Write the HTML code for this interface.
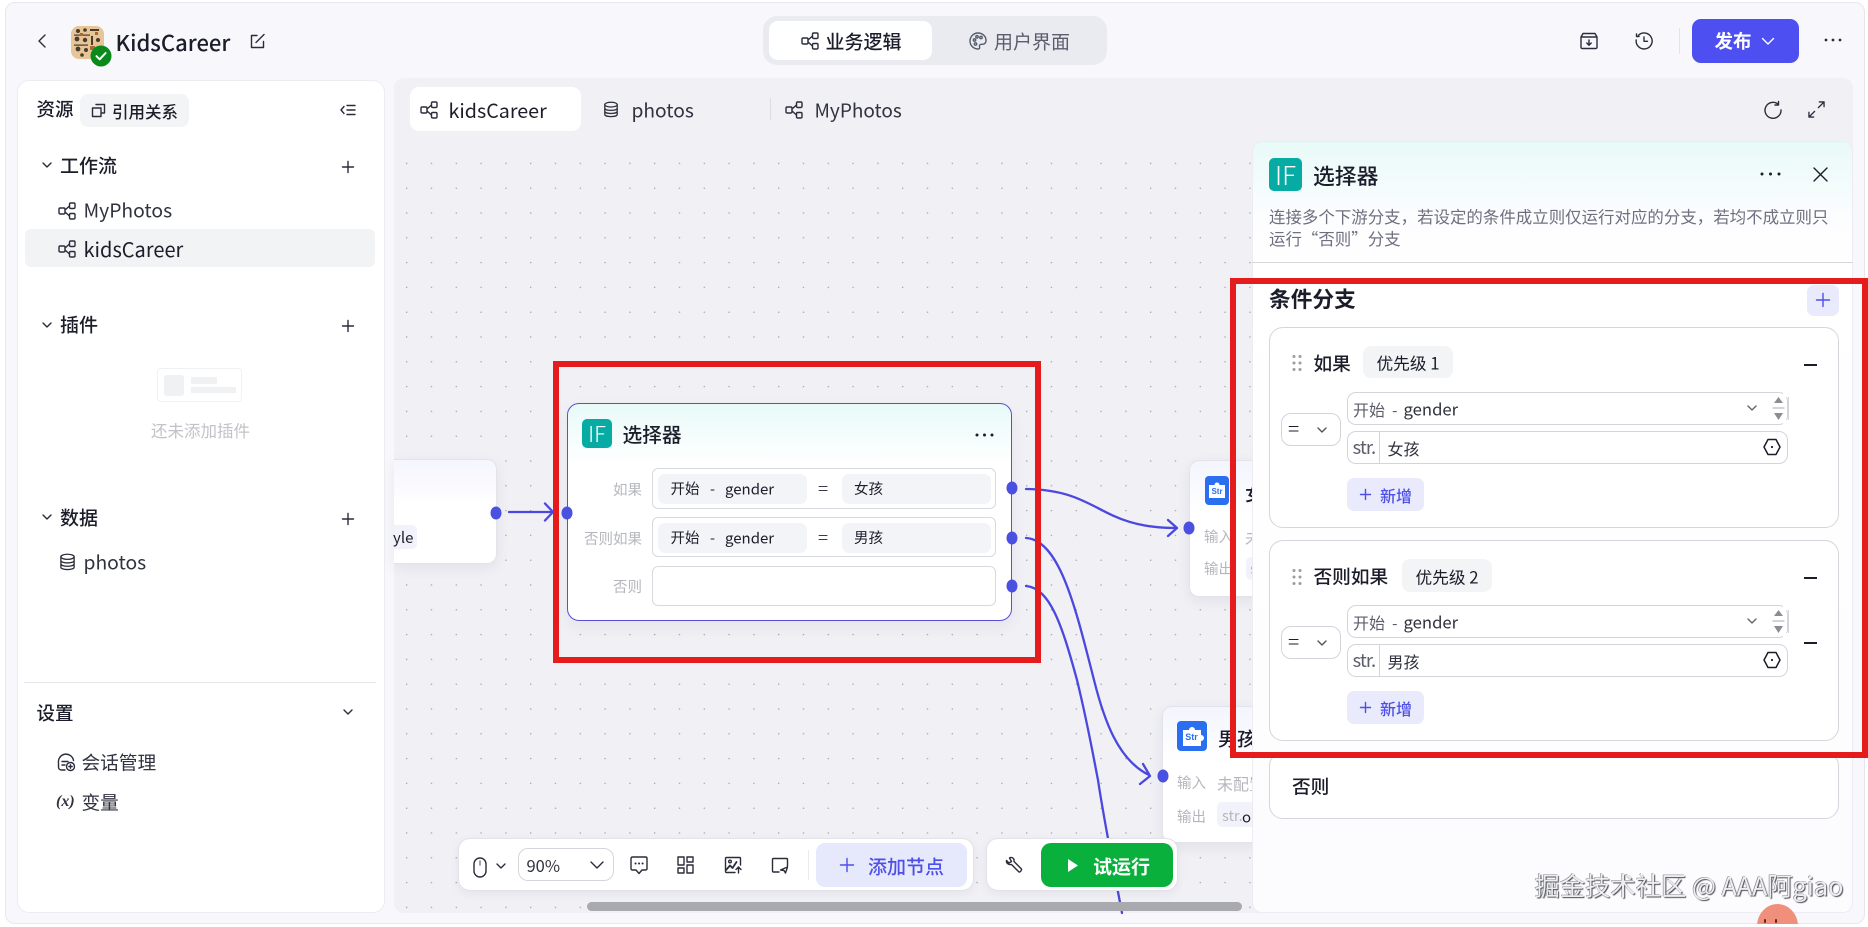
<!DOCTYPE html>
<html lang="zh-CN">
<head>
<meta charset="utf-8">
<title>KidsCareer</title>
<style>
*{box-sizing:border-box;margin:0;padding:0}
html,body{width:1868px;height:927px;overflow:hidden;background:#fff}
body{position:relative;font-family:"Noto Sans CJK SC","Liberation Sans",sans-serif;color:#1c1d2b}
.a{position:absolute}
.t{position:absolute;white-space:nowrap;line-height:1;transform:translateY(-50%)}
.ic{position:absolute;overflow:visible;fill:none;stroke:#2a2c3a;stroke-width:1.4;stroke-linecap:round;stroke-linejoin:round}
.g{background:#f3f4f6;border-radius:8px}
.b{background:#fff;border:1px solid #d4d5db}
.red{position:absolute;background:#e51c1c;z-index:40}
.row{position:absolute;left:652px;width:344px;background:#fff;border:1px solid #d8d9df;border-radius:6px}
.pill{position:absolute;height:30px;background:#f3f4f7;border-radius:7px}
.lb{color:#b6b7bd;font-size:14.5px}
.card{position:absolute;left:1268.5px;width:570.5px;background:#fff;border:1px solid #d5d6dc;border-radius:14px}
.blue{background:#e9eafc;border-radius:7px}
.port{position:absolute;width:11px;height:13px;border-radius:50%;background:#4a50e0;transform:translate(-50%,-50%)}
</style>
</head>
<body>
<svg width="0" height="0" style="position:absolute">
<defs>
<symbol id="flow" viewBox="0 0 18 18"><rect x="1" y="6" width="6" height="6" rx="1.2"/><rect x="11.5" y="1" width="5.5" height="5.5" rx="1.2"/><rect x="11.5" y="11.5" width="5.5" height="5.5" rx="1.2"/><path d="M7 8 L11.5 4 M7 10 L11.5 14"/></symbol>
<symbol id="db" viewBox="0 0 18 18"><ellipse cx="9" cy="3.5" rx="7" ry="2.7"/><path d="M2 3.5V14.500C2 16 5 17 9 17C13 17 16 16 16 14.500V3.500M2 7.500C2 9 5 10 9 10C13 10 16 9 16 7.500M2 11C2 12.500 5 13.500 9 13.500C13 13.500 16 12.500 16 11"/></symbol>
<symbol id="hex" viewBox="0 0 18 18"><path d="M5 1.500H13L17 9L13 16.500H5L1 9Z" stroke-width="1.5"/><circle cx="9" cy="9" r="1.1" fill="#1c1d2b" stroke="none"/></symbol>
<symbol id="drag" viewBox="0 0 10 18"><g fill="#9b9ca3" stroke="none"><circle cx="2" cy="2.500" r="1.500"/><circle cx="8" cy="2.500" r="1.500"/><circle cx="2" cy="9" r="1.500"/><circle cx="8" cy="9" r="1.500"/><circle cx="2" cy="15.500" r="1.500"/><circle cx="8" cy="15.500" r="1.500"/></g></symbol>
<pattern id="dots" x="406" y="162.7" width="24.8" height="24.8" patternUnits="userSpaceOnUse"><circle cx="0.7" cy="0.7" r="0.7" fill="#9a9aa3"/></pattern>
</defs>
</svg>

<!-- outer frame -->
<div class="a" style="left:5px;top:2px;width:1860px;height:922px;background:#f8f8fc;border:1px solid #e8e8ec;border-radius:10px"></div>

<!-- top bar -->
<svg class="ic" style="left:36px;top:33px" width="12" height="16" stroke-width="1.7"><path d="M9 2 L3 8 L9 14"/></svg>
<svg class="a" style="left:70.500px;top:26px" width="33" height="33" viewBox="0 0 33 33">
<rect width="33" height="33" rx="8" fill="#e6c596"/>
<g fill="#4a3b2c"><circle cx="7" cy="5" r="2"/><circle cx="14" cy="4" r="1.800"/><rect x="19" y="3" width="9" height="2"/><circle cx="6" cy="13" r="2.400"/><circle cx="14" cy="14" r="2.200"/><rect x="20" y="10" width="2" height="9"/><circle cx="27" cy="14" r="2"/><circle cx="7" cy="23" r="2.400"/><circle cx="15" cy="24" r="2"/><rect x="3" y="8.500" width="16" height="1.200"/><rect x="3" y="18.500" width="14" height="1.200"/><circle cx="11" cy="29" r="1.800"/></g>
<g fill="#a9683a"><rect x="9" y="7" width="3" height="3"/><rect x="19" y="20" width="5" height="4"/><rect x="24" y="6" width="3" height="3"/></g>
</svg>
<svg class="a" style="left:90px;top:45px" width="22" height="22" viewBox="0 0 22 22"><circle cx="11" cy="11" r="10.500" fill="#0b8a1c"/><path d="M6.500 11.200 L9.700 14.300 L15.600 8" fill="none" stroke="#fff" stroke-width="2" stroke-linecap="round" stroke-linejoin="round"/></svg>
<div class="t" style="left:115.500px;top:41.500px;font-size:22px;font-weight:500">KidsCareer</div>
<svg class="ic" style="left:249px;top:33px" width="17" height="16" stroke-width="1.600"><path d="M8 2.500H2.500V14.500H14.500V8.500M7 9.500 L15 1.500"/></svg>

<!-- segment -->
<div class="a" style="left:763px;top:16px;width:344px;height:49px;background:#eaebf1;border-radius:14px"></div>
<div class="a" style="left:769px;top:21px;width:163px;height:39px;background:#fff;border-radius:9px"></div>
<svg class="ic" style="left:801px;top:32px" width="18" height="18"><use href="#flow"/></svg>
<div class="t" style="left:825.500px;top:41px;font-size:19px;font-weight:500">业务逻辑</div>
<svg class="ic" style="left:969px;top:32px;stroke:#555a68" width="18" height="18" viewBox="0 0 18 18"><path d="M9 1C4.500 1 1 4.600 1 9C1 13.400 4.500 17 9 17C10.500 17 11 16 10.500 14.800C10 13.400 11 12.200 12.500 12.300C15 12.500 17 11.500 17 8.500C17 4.300 13.500 1 9 1Z"/><circle cx="5.500" cy="8" r="1.200"/><circle cx="8" cy="4.800" r="1.200"/><circle cx="12" cy="5.500" r="1.200"/><circle cx="6.500" cy="12" r="1.200"/></svg>
<div class="t" style="left:994px;top:41px;font-size:19px;color:#5a5e6c">用户界面</div>

<!-- top right -->
<svg class="ic" style="left:1580px;top:32px" width="18" height="18" viewBox="0 0 18 18" stroke-width="1.500"><path d="M3 1.500H15L17 5V15.500C17 16 16.500 16.500 16 16.500H2C1.500 16.500 1 16 1 15.500V5ZM1 5H17M9 8V13M6.800 11 L9 13.200 L11.200 11"/></svg>
<svg class="ic" style="left:1635px;top:32px" width="18" height="18" viewBox="0 0 18 18" stroke-width="1.500"><path d="M3.500 3.300A8 8 0 1 1 1.200 8M1.500 2V4.500H4M9 5V9.300H12.500"/></svg>
<div class="a" style="left:1679px;top:28px;width:1px;height:26px;background:#e3e4e9"></div>
<div class="a" style="left:1691.500px;top:19px;width:107px;height:44px;background:#4d4ff0;border-radius:9px"></div>
<div class="t" style="left:1714.500px;top:41px;font-size:18.500px;font-weight:700;color:#fff">发布</div>
<svg class="ic" style="left:1761px;top:37px;stroke:#fff" width="14" height="9" stroke-width="1.500"><path d="M1.500 1.500 L7 7 L12.500 1.500"/></svg>
<svg class="a" style="left:1824px;top:38px" width="18" height="4"><g fill="#2a2c3a"><circle cx="2" cy="2" r="1.400"/><circle cx="9" cy="2" r="1.400"/><circle cx="16" cy="2" r="1.400"/></g></svg>

<!-- left panel -->
<div class="a" style="left:16.500px;top:80px;width:368px;height:833px;background:#fff;border:1px solid #ecedf1;border-radius:12px"></div>
<div class="t" style="left:36.500px;top:109px;font-size:18.500px;font-weight:500">资源</div>
<div class="a g" style="left:79.500px;top:94px;width:109.500px;height:33px"></div>
<svg class="ic" style="left:91px;top:103px" width="15" height="15" viewBox="0 0 15 15"><path d="M5 1.500H13.500V10H10M1.500 5H10V13.500H1.500Z"/></svg>
<div class="t" style="left:112px;top:110.500px;font-size:16.500px;font-weight:500">引用关系</div>
<svg class="ic" style="left:340px;top:104px" width="16" height="12" viewBox="0 0 16 12"><path d="M4 2.500 L1 6 L4 9.500M7 1.500H15M7 6H15M7 10.500H15"/></svg>

<svg class="ic" style="left:42px;top:162px" width="10" height="7"><path d="M1 1 L5 5 L9 1"/></svg>
<div class="t" style="left:60px;top:165px;font-size:19px;font-weight:500">工作流</div>
<svg class="ic" style="left:342px;top:161px" width="12" height="12"><path d="M6 0.500V11.500M0.500 6H11.500"/></svg>
<svg class="ic" style="left:58px;top:201.500px" width="18" height="18"><use href="#flow"/></svg>
<div class="t" style="left:83.500px;top:210px;font-size:19.300px;color:#30323f">MyPhotos</div>
<div class="a" style="left:25px;top:229px;width:349.500px;height:38px;background:#f2f3f5;border-radius:6px"></div>
<svg class="ic" style="left:58px;top:240px" width="18" height="18"><use href="#flow"/></svg>
<div class="t" style="left:83.500px;top:249px;font-size:20px;color:#1c1d2b">kidsCareer</div>

<svg class="ic" style="left:42px;top:322px" width="10" height="7"><path d="M1 1 L5 5 L9 1"/></svg>
<div class="t" style="left:60px;top:324px;font-size:19px;font-weight:500">插件</div>
<svg class="ic" style="left:342px;top:320px" width="12" height="12"><path d="M6 0.500V11.500M0.500 6H11.500"/></svg>
<div class="a" style="left:156.500px;top:368px;width:85px;height:34px;border:1px solid #f0f1f3;border-radius:4px;background:#fff"></div>
<div class="a" style="left:164px;top:375px;width:20px;height:21px;background:#f0f1f3;border-radius:3px"></div>
<div class="a" style="left:190.500px;top:377px;width:26px;height:7px;background:#f0f1f3"></div>
<div class="a" style="left:190.500px;top:387px;width:45px;height:6px;background:#f0f1f3"></div>
<div class="t" style="left:151px;top:430px;font-size:16.500px;color:#c2c3c9">还未添加插件</div>

<svg class="ic" style="left:42px;top:514px" width="10" height="7"><path d="M1 1 L5 5 L9 1"/></svg>
<div class="t" style="left:60px;top:517px;font-size:19px;font-weight:500">数据</div>
<svg class="ic" style="left:342px;top:513px" width="12" height="12"><path d="M6 0.500V11.500M0.500 6H11.500"/></svg>
<svg class="ic" style="left:59px;top:553px" width="17" height="18"><use href="#db"/></svg>
<div class="t" style="left:83.500px;top:562px;font-size:19.300px;color:#30323f">photos</div>

<div class="a" style="left:24px;top:682px;width:352px;height:1px;background:#e6e7eb"></div>
<div class="t" style="left:36.500px;top:713px;font-size:18.500px;font-weight:500">设置</div>
<svg class="ic" style="left:343px;top:709px" width="10" height="7"><path d="M1 1 L5 5 L9 1"/></svg>
<svg class="ic" style="left:57px;top:754px" width="19" height="18" viewBox="0 0 19 18" stroke-width="1.300"><path d="M8 16H4.500C2.500 16 1.500 14.500 1.500 13V9A7.500 7.500 0 0 1 16.500 6.500M5 7.500H11M5 11H8"/><circle cx="13.500" cy="12.500" r="4"/><path d="M13.500 10.800V14.200M11.800 12.500H15.200"/></svg>
<div class="t" style="left:81.500px;top:763px;font-size:18.700px;color:#30323f">会话管理</div>
<div class="t" style="left:56px;top:802px;font-size:16px;font-weight:700;font-style:italic;color:#30323f;font-family:'Liberation Serif',serif">(x)</div>
<div class="t" style="left:81.500px;top:803px;font-size:18.700px;color:#30323f">变量</div>

<!-- canvas -->
<div class="a" id="canvas" style="left:393.500px;top:78px;width:1459.500px;height:835px;background:#f0f0f5;border-radius:10px"></div>
<svg class="a" style="left:0;top:0" width="1868" height="927"><rect x="394" y="150" width="858" height="763" fill="url(#dots)"/></svg>

<!-- tabs -->
<div class="a" style="left:410px;top:87px;width:171px;height:44px;background:#fff;border-radius:9px"></div>
<svg class="ic" style="left:420px;top:101px" width="18" height="18"><use href="#flow"/></svg>
<div class="t" style="left:448.500px;top:110px;font-size:19.700px">kidsCareer</div>
<svg class="ic" style="left:603px;top:101px" width="16" height="17"><use href="#db"/></svg>
<div class="t" style="left:631.500px;top:110px;font-size:19.200px;color:#30323f">photos</div>
<div class="a" style="left:770px;top:98px;width:1px;height:22px;background:#dcdde2"></div>
<svg class="ic" style="left:785px;top:101px" width="18" height="18"><use href="#flow"/></svg>
<div class="t" style="left:814.500px;top:110px;font-size:19px;color:#30323f">MyPhotos</div>
<svg class="ic" style="left:1764px;top:101px" width="18" height="18" viewBox="0 0 18 18" stroke-width="1.500"><path d="M14.500 3.500A8 8 0 1 0 17 9M14.500 0.500V4H11"/></svg>
<svg class="ic" style="left:1808px;top:101px" width="17" height="17" viewBox="0 0 18 18" stroke-width="1.600"><path d="M11 7 L17 1M12 1H17V6M7 11 L1 17M1 12V17H6"/></svg>

<!-- prev node -->
<div class="a" style="left:394px;top:459px;width:102.500px;height:105px;background:linear-gradient(#f5f5fe,#fff 45%);border:1px solid #e3e3ea;border-left:0;border-radius:0 10px 10px 0;box-shadow:0 4px 14px rgba(30,30,60,.07)"></div>
<div class="a" style="left:394px;top:525px;width:23px;height:24px;background:#f2f3fa;border-radius:0 5px 5px 0"></div>
<div class="t" style="left:393px;top:538px;font-size:15px;width:24px;overflow:hidden;line-height:22px">yle</div>
<div class="port" style="left:496px;top:513px"></div>

<!-- selector node -->
<div class="a" style="left:567px;top:403px;width:445px;height:218px;background:linear-gradient(#e8faf8,#fff 28%);border:1px solid #5650d6;border-radius:12px;box-shadow:0 6px 16px rgba(30,30,60,.06)"></div>
<div class="a" style="left:582px;top:419px;width:30px;height:29px;background:#06aca3;border-radius:5px;color:#fff;font-size:22px;line-height:29px;text-align:center;font-weight:300">IF</div>
<div class="t" style="left:622.500px;top:433.500px;font-size:19.700px;font-weight:500">选择器</div>
<svg class="a" style="left:975px;top:433px" width="19" height="4"><g fill="#1c1d2b"><circle cx="2" cy="2" r="1.500"/><circle cx="9.500" cy="2" r="1.500"/><circle cx="17" cy="2" r="1.500"/></g></svg>

<div class="t lb" style="right:1226px;top:490px">如果</div>
<div class="t lb" style="right:1226px;top:538.500px">否则如果</div>
<div class="t lb" style="right:1226px;top:587px">否则</div>
<div class="row" style="top:468px;height:41px"></div>
<div class="row" style="top:517px;height:40px"></div>
<div class="row" style="top:566px;height:40px"></div>
<div class="pill" style="left:657.500px;top:474px;width:149.500px"></div>
<div class="pill" style="left:842px;top:474px;width:148.500px"></div>
<div class="pill" style="left:657.500px;top:523px;width:149.500px"></div>
<div class="pill" style="left:842px;top:523px;width:148.500px"></div>
<div class="t" style="left:670.500px;top:489px;font-size:14.500px">开始</div>
<div class="t" style="left:710px;top:489px;font-size:14.500px">-</div>
<div class="t" style="left:725px;top:489px;font-size:15px">gender</div>
<div class="t" style="left:818px;top:488px;font-size:19px;font-weight:300">=</div>
<div class="t" style="left:854px;top:489px;font-size:14.500px">女孩</div>
<div class="t" style="left:670.500px;top:538px;font-size:14.500px">开始</div>
<div class="t" style="left:710px;top:538px;font-size:14.500px">-</div>
<div class="t" style="left:725px;top:538px;font-size:15px">gender</div>
<div class="t" style="left:818px;top:537px;font-size:19px;font-weight:300">=</div>
<div class="t" style="left:854px;top:538px;font-size:14.500px">男孩</div>
<div class="port" style="left:567px;top:513px"></div>
<div class="port" style="left:1012px;top:488px"></div>
<div class="port" style="left:1012px;top:538px"></div>
<div class="port" style="left:1012px;top:586px"></div>

<!-- node 1 -->
<div class="a" style="left:1189px;top:459.500px;width:80px;height:137.500px;background:linear-gradient(#f3f5fe,#fff 40%);border:1px solid #e3e3ea;border-radius:10px;box-shadow:0 4px 14px rgba(30,30,60,.07)"></div>
<svg class="a" style="left:1205px;top:476px" width="24" height="29" viewBox="0 0 24 29"><rect width="24" height="29" rx="4" fill="#2a6ff0"/><path d="M4 9H9.500A2.500 2.500 0 1 1 14.500 9H20V22H4Z" fill="#fff"/><text x="12" y="18" font-size="8" font-weight="700" fill="#2a6ff0" text-anchor="middle" font-family="Liberation Sans,sans-serif">Str</text></svg>
<div class="t" style="left:1245px;top:493px;font-size:19px;font-weight:500">女孩</div>
<div class="t lb" style="left:1204px;top:537px">输入</div>
<div class="t lb" style="left:1245px;top:537px;font-size:16px">未配置</div>
<div class="t lb" style="left:1204px;top:569px">输出</div>
<div class="a" style="left:1246px;top:557px;width:30px;height:23px;background:#f2f3fa;border-radius:5px"></div>
<div class="t lb" style="left:1250px;top:569px">str.</div>
<div class="port" style="left:1189px;top:528px"></div>

<!-- node 2 -->
<div class="a" style="left:1162px;top:705.500px;width:100px;height:137.500px;background:linear-gradient(#f3f5fe,#fff 40%);border:1px solid #e3e3ea;border-radius:10px;box-shadow:0 4px 14px rgba(30,30,60,.07)"></div>
<svg class="a" style="left:1177px;top:721px" width="30" height="30" viewBox="0 0 30 30"><rect width="30" height="30" rx="4" fill="#2a6ff0"/><path d="M6 9H12A3 3 0 1 1 18 9H24V14A3 3 0 1 1 24 20V25H6Z" fill="#fff"/><text x="14.500" y="19" font-size="9" font-weight="700" fill="#2a6ff0" text-anchor="middle" font-family="Liberation Sans,sans-serif">Str</text></svg>
<div class="t" style="left:1218px;top:738px;font-size:19px;font-weight:500">男孩</div>
<div class="t lb" style="left:1177px;top:783px">输入</div>
<div class="t lb" style="left:1217px;top:783px;font-size:16px">未配置</div>
<div class="t lb" style="left:1177px;top:817px">输出</div>
<div class="a" style="left:1216.500px;top:802px;width:40px;height:25px;background:#f2f3fa;border-radius:5px"></div>
<div class="t lb" style="left:1222px;top:816px">str.</div>
<div class="t" style="left:1242px;top:817px;font-size:15px">o</div>
<div class="port" style="left:1162.500px;top:776px"></div>

<!-- edges -->
<svg class="a" style="left:0;top:0" width="1868" height="927" fill="none" stroke="#4a48de" stroke-width="2.300" stroke-linecap="round" stroke-linejoin="round">
<path d="M509 512 H552 M545 503.500 L553 512 L545 520.500"/>
<path d="M1026 489 C1100 490 1098 528 1176 528 M1168 520 L1177 528 L1168 536"/>
<path d="M1026 538 C1060 540 1076 610 1094 680 C1104 720 1118 760 1149 775 M1143 764 L1150 776 L1140 784"/>
<path d="M1026 586 C1050 588 1062 625 1077 680 C1088 725 1094 760 1098 780 C1104 820 1112 860 1122 913"/>
</svg>

<!-- toolbars -->
<div class="a" style="left:457.500px;top:838px;width:516px;height:53px;background:#fff;border:1px solid #e2e3e8;border-radius:12px;box-shadow:0 3px 10px rgba(30,30,60,.06)"></div>
<svg class="ic" style="left:473px;top:857px" width="14" height="21" viewBox="0 0 14 21" stroke-width="1.400"><rect x="1" y="1" width="12" height="19" rx="6"/><path d="M7 4V8" stroke="#777"/></svg>
<svg class="ic" style="left:496px;top:863px" width="10" height="7"><path d="M1 1 L5 5 L9 1"/></svg>
<div class="a" style="left:518px;top:848px;width:95.500px;height:33px;background:#fff;border:1px solid #d5d6dc;border-radius:10px"></div>
<div class="t" style="left:526.500px;top:865px;font-size:16.500px;color:#30323f">90%</div>
<svg class="ic" style="left:590px;top:861px" width="14" height="9"><path d="M1 1 L7 7 L13 1"/></svg>
<svg class="ic" style="left:630px;top:856px" width="18" height="19" viewBox="0 0 18 19" stroke="#1c1d2b"><path d="M2.500 1H15.500C16.400 1 17 1.600 17 2.500V12.500C17 13.400 16.400 14 15.500 14H12L9 17.500L6 14H2.500C1.600 14 1 13.400 1 12.500V2.500C1 1.600 1.600 1 2.500 1Z"/><path d="M5.500 7.500H5.600M9 7.500H9.100M12.500 7.500H12.600" stroke-width="2"/></svg>
<svg class="ic" style="left:677px;top:856px" width="17" height="18" viewBox="0 0 17 18"><rect x="1" y="1" width="6" height="8"/><rect x="10" y="1" width="6" height="5"/><rect x="1" y="12" width="6" height="5"/><rect x="10" y="9" width="6" height="8"/></svg>
<svg class="ic" style="left:724px;top:856px" width="19" height="18" viewBox="0 0 19 18"><path d="M11 16.500H2.500C1.900 16.500 1.500 16.100 1.500 15.500V2.500C1.500 1.900 1.900 1.500 2.500 1.500H15.500C16.100 1.500 16.500 1.900 16.500 2.500V9"/><path d="M2 14 L6 9.500 L8.500 12 L12.500 6" stroke-width="1.800"/><circle cx="6" cy="5.500" r="1.300"/><path d="M14.500 17V11M12 13.500 L14.500 11 L17 13.500"/></svg>
<svg class="ic" style="left:771px;top:857px" width="18" height="17" viewBox="0 0 18 17"><path d="M8 15H2.500C1.900 15 1.500 14.600 1.500 14V2.500C1.500 1.900 1.900 1.500 2.500 1.500H15.500C16.100 1.500 16.500 1.900 16.500 2.500V9M9.500 13 L16.500 10 L14.500 16 L13 13.500 Z"/></svg>
<div class="a" style="left:808px;top:850px;width:1px;height:30px;background:#ebebef"></div>
<div class="a" style="left:816px;top:843px;width:150.500px;height:44px;background:#e6e8fb;border-radius:9px"></div>
<svg class="ic" style="left:840px;top:858px;stroke:#4d4fe8" width="14" height="14"><path d="M7 0.500V13.500M0.500 7H13.500"/></svg>
<div class="t" style="left:868px;top:866px;font-size:19px;font-weight:500;color:#4d4fe8">添加节点</div>

<div class="a" style="left:986px;top:838px;width:192px;height:53px;background:#fff;border:1px solid #e2e3e8;border-radius:12px;box-shadow:0 3px 10px rgba(30,30,60,.06)"></div>
<svg class="ic" style="left:1005px;top:856px" width="18" height="18" viewBox="0 0 18 18" stroke-width="1.400"><path d="M1.500 4.500 L4 7 L6.500 5.500 L4.500 2 C7 0.500 9.500 2.500 9 5.500 L16.500 13 C17 14 15 16.500 14 16 L6.500 8.500 C4 9 1 7.500 1.500 4.500Z"/></svg>
<div class="a" style="left:1041px;top:843px;width:132px;height:44px;background:#09b03b;border-radius:10px"></div>
<svg class="a" style="left:1067px;top:858px" width="12" height="15"><path d="M1 1 L11 7.500 L1 14Z" fill="#fff"/></svg>
<div class="t" style="left:1093px;top:866px;font-size:19px;font-weight:700;color:#fff">试运行</div>

<!-- scrollbar -->
<div class="a" style="left:587px;top:902px;width:655px;height:9px;background:#a9aab0;border-radius:5px"></div>

<!-- right panel -->
<div class="a" style="left:1252px;top:141px;width:601px;height:772px;background:linear-gradient(#e8faf8,#fdfdff 80px,#fff 125px,#fcfcfe);border:1px solid #ececf2;border-radius:10px;z-index:10"></div>
<div id="rp" style="position:absolute;left:0;top:0;z-index:11">
<div class="a" style="left:1269px;top:158px;width:33px;height:33px;background:#06aca3;border-radius:5px;color:#fff;font-size:26px;line-height:33px;text-align:center;font-weight:300">IF</div>
<div class="t" style="left:1313px;top:175.500px;font-size:21.800px;font-weight:500">选择器</div>
<svg class="a" style="left:1760px;top:172px" width="21" height="4"><g fill="#1c1d2b"><circle cx="2" cy="2" r="1.500"/><circle cx="10.500" cy="2" r="1.500"/><circle cx="19" cy="2" r="1.500"/></g></svg>
<svg class="ic" style="left:1813px;top:167px;stroke:#1c1d2b" width="15" height="15" stroke-width="1.600"><path d="M1 1 L14 14 M14 1 L1 14"/></svg>
<div class="t" style="left:1269px;top:215.500px;font-size:16.470px;color:#6e7080">连接多个下游分支，若设定的条件成立则仅运行对应的分支，若均不成立则只</div>
<div class="t" style="left:1269px;top:237.500px;font-size:16.470px;color:#6e7080">运行“否则”分支</div>
<div class="a" style="left:1252px;top:262px;width:601px;height:1px;background:#d5d5da"></div>

<div class="t" style="left:1269px;top:298.500px;font-size:21.700px;font-weight:700">条件分支</div>
<div class="a blue" style="left:1806.500px;top:285px;width:32.500px;height:31px"></div>
<svg class="ic" style="left:1816px;top:293px;stroke:#4d4fe8" width="14" height="14"><path d="M7 0.500V13.500M0.500 7H13.500"/></svg>

<!-- card 1 -->
<div class="card" style="top:327px;height:201px"></div>
<svg class="a" style="left:1292px;top:354px" width="10" height="18"><use href="#drag"/></svg>
<div class="t" style="left:1313.500px;top:364px;font-size:18.700px;font-weight:500">如果</div>
<div class="a g" style="left:1363px;top:346px;width:90px;height:32px"></div>
<div class="t" style="left:1376.500px;top:363px;font-size:16.700px">优先级 1</div>
<div class="a" style="left:1804px;top:364px;width:13px;height:1.600px;background:#1c1d2b"></div>

<div class="a b" style="left:1280.500px;top:413px;width:60px;height:33px;border-radius:10px"></div>
<div class="t" style="left:1288px;top:429px;font-size:21px;font-weight:300">=</div>
<svg class="ic" style="left:1317px;top:427px;stroke:#555" width="10" height="7" stroke-width="1.200"><path d="M1 1 L5 5 L9 1"/></svg>

<div class="a b" style="left:1347px;top:392px;width:441px;height:33px;border-radius:9px"></div>
<div class="a" style="left:1783px;top:391px;width:6px;height:6px;background:#fff"></div>
<div class="a" style="left:1783px;top:420px;width:6px;height:6px;background:#fff"></div>
<div class="t" style="left:1353px;top:409px;font-size:16px;color:#5c5e6b">开始</div>
<div class="t" style="left:1392px;top:409px;font-size:16px;color:#5c5e6b">-</div>
<div class="t" style="left:1403.500px;top:409px;font-size:16.700px;color:#30323f">gender</div>
<svg class="ic" style="left:1747px;top:405px;stroke:#666" width="10" height="7" stroke-width="1.100"><path d="M1 1 L5 5 L9 1"/></svg>
<svg class="a" style="left:1772px;top:397px" width="13" height="23"><path d="M6.500 0 L11 6 H2Z M6.500 23 L11 16 H2Z" fill="#8c8d94"/><path d="M0.500 11H12.500" stroke="#a9aab0"/></svg>
<div class="a" style="left:1788px;top:397px;width:1px;height:23px;background:#d4d5db"></div>

<div class="a b" style="left:1347px;top:431px;width:441px;height:33px;border-radius:9px"></div>
<div class="t" style="left:1352.500px;top:446.500px;font-size:18.500px;letter-spacing:-.9px;color:#5c5e6b">str.</div>
<div class="a" style="left:1378.500px;top:432px;width:1px;height:31px;background:#d4d5db"></div>
<div class="t" style="left:1387.500px;top:447.500px;font-size:16px;color:#30323f">女孩</div>
<svg class="ic" style="left:1763px;top:438px;stroke:#1c1d2b" width="18" height="18"><use href="#hex"/></svg>

<div class="a blue" style="left:1347px;top:478px;width:76.500px;height:33px"></div>
<svg class="ic" style="left:1360px;top:489px;stroke:#4d4fe8" width="11" height="11"><path d="M5.500 0.500V10.500M0.500 5.500H10.500"/></svg>
<div class="t" style="left:1380px;top:495px;font-size:16px;font-weight:500;color:#4d4fe8">新增</div>

<!-- card 2 -->
<div class="card" style="top:540px;height:201px"></div>
<svg class="a" style="left:1292px;top:567.500px" width="10" height="18"><use href="#drag"/></svg>
<div class="t" style="left:1313.500px;top:577px;font-size:18.700px;font-weight:500">否则如果</div>
<div class="a g" style="left:1401.500px;top:559px;width:90px;height:33px"></div>
<div class="t" style="left:1415.500px;top:576.500px;font-size:16.700px">优先级 2</div>
<div class="a" style="left:1804px;top:577px;width:13px;height:1.600px;background:#1c1d2b"></div>
<div class="a" style="left:1804px;top:642px;width:13px;height:1.600px;background:#1c1d2b"></div>

<div class="a b" style="left:1280.500px;top:626px;width:60px;height:33px;border-radius:10px"></div>
<div class="t" style="left:1288px;top:642px;font-size:21px;font-weight:300">=</div>
<svg class="ic" style="left:1317px;top:640px;stroke:#555" width="10" height="7" stroke-width="1.200"><path d="M1 1 L5 5 L9 1"/></svg>

<div class="a b" style="left:1347px;top:605px;width:441px;height:33px;border-radius:9px"></div>
<div class="a" style="left:1783px;top:604px;width:6px;height:6px;background:#fff"></div>
<div class="a" style="left:1783px;top:633px;width:6px;height:6px;background:#fff"></div>
<div class="t" style="left:1353px;top:622px;font-size:16px;color:#5c5e6b">开始</div>
<div class="t" style="left:1392px;top:622px;font-size:16px;color:#5c5e6b">-</div>
<div class="t" style="left:1403.500px;top:622px;font-size:16.700px;color:#30323f">gender</div>
<svg class="ic" style="left:1747px;top:618px;stroke:#666" width="10" height="7" stroke-width="1.100"><path d="M1 1 L5 5 L9 1"/></svg>
<svg class="a" style="left:1772px;top:610px" width="13" height="23"><path d="M6.500 0 L11 6 H2Z M6.500 23 L11 16 H2Z" fill="#8c8d94"/><path d="M0.500 11H12.500" stroke="#a9aab0"/></svg>
<div class="a" style="left:1788px;top:610px;width:1px;height:23px;background:#d4d5db"></div>

<div class="a b" style="left:1347px;top:644px;width:441px;height:33px;border-radius:9px"></div>
<div class="t" style="left:1352.500px;top:659.500px;font-size:18.500px;letter-spacing:-.9px;color:#5c5e6b">str.</div>
<div class="a" style="left:1378.500px;top:645px;width:1px;height:31px;background:#d4d5db"></div>
<div class="t" style="left:1387.500px;top:660.500px;font-size:16px;color:#30323f">男孩</div>
<svg class="ic" style="left:1763px;top:651px;stroke:#1c1d2b" width="18" height="18"><use href="#hex"/></svg>

<div class="a blue" style="left:1347px;top:691px;width:76.500px;height:33px"></div>
<svg class="ic" style="left:1360px;top:702px;stroke:#4d4fe8" width="11" height="11"><path d="M5.500 0.500V10.500M0.500 5.500H10.500"/></svg>
<div class="t" style="left:1380px;top:708px;font-size:16px;font-weight:500;color:#4d4fe8">新增</div>

<!-- card 3 -->
<div class="card" style="top:752px;height:66.500px"></div>
<div class="t" style="left:1292px;top:787px;font-size:18.700px;font-weight:500">否则</div>
</div>

<!-- mascot -->
<div class="a" style="left:1757px;top:904px;width:41px;height:20px;overflow:hidden;z-index:12">
<div class="a" style="left:0;top:0;width:41px;height:44px;border-radius:50%;background:#f0907c"></div>
<div class="a" style="left:7px;top:15px;width:2px;height:4px;background:#5c2a20;border-radius:1px"></div>
<div class="a" style="left:18px;top:15px;width:2px;height:4px;background:#5c2a20;border-radius:1px"></div>
</div>

<!-- watermark -->
<div class="t" style="left:1534.500px;top:886px;font-size:25.300px;color:#eeeef0;text-shadow:1px 1px 1px #4a4b50,-0.6px -0.6px 0 #85868c;z-index:30">掘金技术社区 @ AAA阿giao</div>

<!-- red annotation boxes -->
<div class="red" style="left:553px;top:361px;width:488px;height:6px"></div>
<div class="red" style="left:553px;top:657px;width:488px;height:6px"></div>
<div class="red" style="left:553px;top:361px;width:6px;height:302px"></div>
<div class="red" style="left:1034.500px;top:361px;width:6.500px;height:302px"></div>

<div class="red" style="left:1229.500px;top:278px;width:638.500px;height:6px"></div>
<div class="red" style="left:1229.500px;top:752px;width:638.500px;height:6px"></div>
<div class="red" style="left:1229.500px;top:278px;width:6px;height:480px"></div>
<div class="red" style="left:1861.500px;top:278px;width:6.500px;height:480px"></div>
</body>
</html>
